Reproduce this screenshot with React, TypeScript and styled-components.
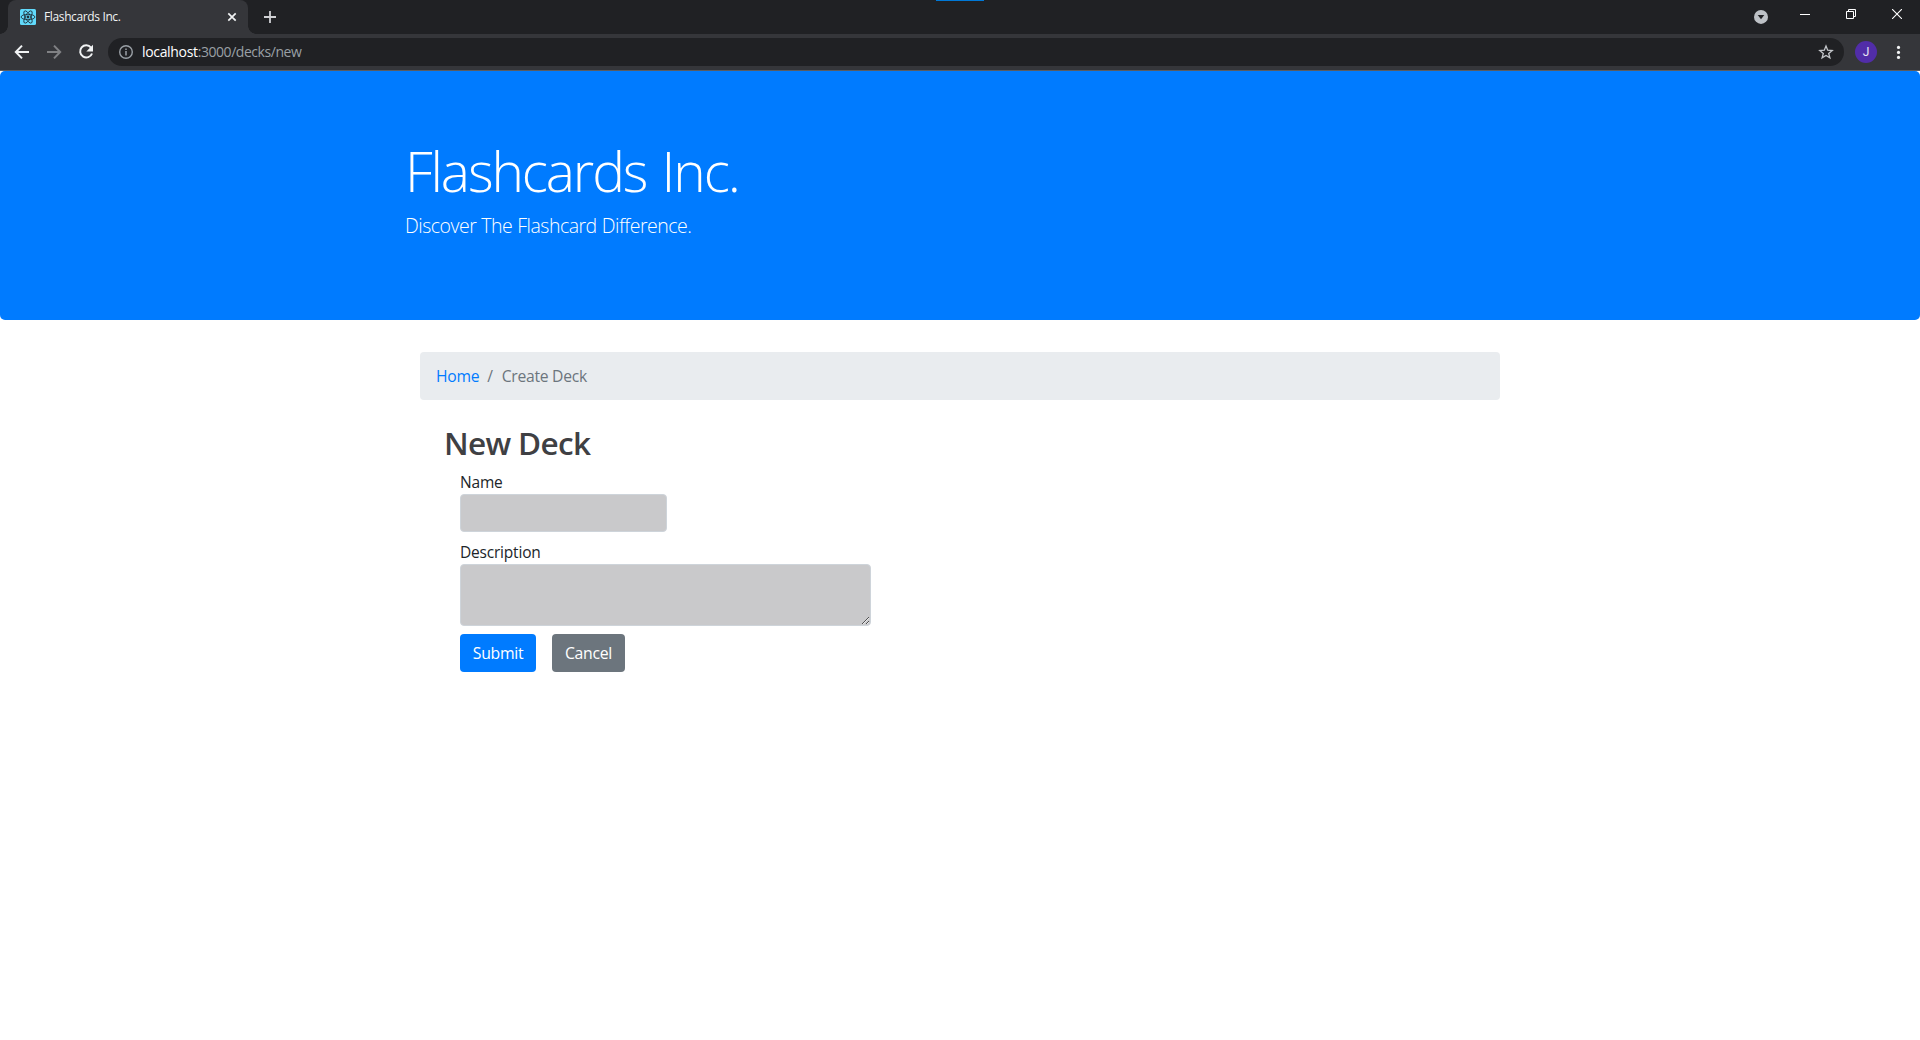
import React from "react";
import styled, { createGlobalStyle } from "styled-components";

const GlobalStyle = createGlobalStyle`
  *, *::before, *::after { box-sizing: border-box; }
  html, body { margin: 0; padding: 0; }
  body {
    background: #fff;
    color: #212529;
    font-family: "Open Sans", "Noto Sans", sans-serif;
    font-size: 16px;
    line-height: 1.5;
    overflow: hidden;
  }
`;

const Window = styled.div`
  display: flex;
  flex-direction: column;
  width: 1920px;
  height: 1040px;
  overflow: hidden;
  background: #fff;
`;

const TabStrip = styled.div`
  position: relative;
  display: flex;
  height: 34px;
  padding-left: 8px;
  background: #202124;
`;

const DragMarker = styled.div`
  position: absolute;
  top: 0;
  left: 936px;
  width: 48px;
  height: 1px;
  background: #0078d7;
`;

const Tab = styled.div`
  position: relative;
  display: flex;
  align-items: center;
  width: 240px;
  height: 34px;
  padding: 0 8px 0 12px;
  border-radius: 8px 8px 0 0;
  background: #35363a;

  &::before,
  &::after {
    content: "";
    position: absolute;
    bottom: 0;
    width: 8px;
    height: 8px;
  }
  &::before {
    left: -8px;
    background: radial-gradient(circle at 0 0, transparent 7.5px, #35363a 8px);
  }
  &::after {
    right: -8px;
    background: radial-gradient(circle at 100% 0, transparent 7.5px, #35363a 8px);
  }
`;

const TabTitle = styled.span`
  flex: 1;
  margin-left: 8px;
  color: #f1f3f4;
  font-size: 12px;
  line-height: 16px;
  letter-spacing: -0.37px;
  white-space: nowrap;
`;

const Glyph = styled.svg`
  display: block;
  flex: none;
`;

const NewTab = styled.div`
  display: flex;
  align-items: center;
  margin-left: 15px;
`;

const WindowControls = styled.div`
  display: flex;
  margin-left: auto;
  height: 28px;
`;

const Control = styled.div<{ $width: number }>`
  display: flex;
  align-items: center;
  justify-content: center;
  width: ${(p) => p.$width}px;
`;

const Toolbar = styled.div`
  display: flex;
  align-items: center;
  height: 37px;
  padding: 0 14px;
  border-bottom: 1px solid #5b5c60;
  background: #35363a;
`;

const NavButtons = styled.div`
  display: flex;
  gap: 16px;
  margin-right: 14px;
`;

const AddressBar = styled.div`
  display: flex;
  flex: 1;
  align-items: center;
  height: 28px;
  padding: 0 10px;
  border-radius: 14px;
  background: #202124;
`;

const Url = styled.div`
  flex: 1;
  margin-left: 8px;
  color: #9aa0a6;
  font-size: 14px;
  line-height: 20px;
  letter-spacing: -0.45px;
  white-space: nowrap;
`;

const Host = styled.span`
  color: #fff;
  letter-spacing: -0.33px;
`;

const Avatar = styled.div`
  display: flex;
  align-items: center;
  justify-content: center;
  width: 22px;
  height: 22px;
  margin: 0 13px 0 11px;
  border-radius: 50%;
  background: #512da8;
  color: #e8e4f4;
  font-family: Roboto, sans-serif;
  font-size: 12px;
  line-height: 22px;
`;

const Jumbotron = styled.header`
  height: 249px;
  flex: none;
  padding: 64px 32px;
  border-radius: 5px;
  background: #007bff;
  color: #fff;
`;

const HeroContainer = styled.div`
  width: 1140px;
  margin: 0 auto;
  padding: 0 15px;
`;

const Display = styled.h1`
  margin: 0;
  padding-top: 2px;
  height: 75px;
  font-size: 55px;
  font-weight: 300;
  line-height: 67px;
  letter-spacing: -2.1px;
  word-spacing: 3px;
  white-space: nowrap;
`;

const Lead = styled.p`
  margin: 0;
  font-size: 19.5px;
  font-weight: 300;
  line-height: 31px;
  letter-spacing: -0.5px;
  word-spacing: 0.5px;
`;

const Content = styled.main`
  width: 1080px;
  margin: 32px auto 0;
`;

const Breadcrumb = styled.nav`
  display: flex;
  height: 48px;
  padding: 12px 16px;
  border-radius: 4px;
  background: #e9ecef;
  color: #6c757d;
  font-size: 15.7px;
  line-height: 24px;
  letter-spacing: -0.28px;
`;

const Crumb = styled.a`
  color: #007bff;
  text-decoration: none;
`;

const Separator = styled.span`
  padding: 0 9px 0 8px;
`;

const DeckForm = styled.form`
  display: flex;
  flex-direction: column;
  align-items: flex-start;
  padding: 24px 0 0 40px;
`;

const Title = styled.h2`
  height: 46px;
  margin: 0 0 0 -16px;
  color: #3f4043;
  font-size: 31.5px;
  font-weight: 600;
  line-height: 38px;
  letter-spacing: -0.65px;
`;

const Label = styled.label`
  height: 24px;
  font-size: 15.5px;
  line-height: 24px;
  letter-spacing: -0.2px;
`;

const TextInput = styled.input`
  width: 207px;
  height: 38px;
  margin: 0 0 8px;
  padding: 6px 12px;
  border: 1px solid #ced4da;
  border-radius: 4px;
  background: #c9c9cb;
  outline: none;
`;

const TextArea = styled.textarea`
  display: block;
  width: 411px;
  height: 62px;
  margin: 0 0 8px;
  padding: 6px 12px;
  border: 1px solid #ced4da;
  border-radius: 4px;
  background: #c9c9cb;
  outline: none;
  resize: both;
`;

const Actions = styled.div`
  display: flex;
  gap: 16px;
`;

const Button = styled.button<{ $tone: string; $width: number }>`
  width: ${(p) => p.$width}px;
  height: 38px;
  padding: 0;
  border: 0;
  border-radius: 4px;
  background: ${(p) => p.$tone};
  color: #fff;
  font-family: inherit;
  font-size: 15.8px;
  line-height: 24px;
  letter-spacing: -0.3px;
`;

const ReactFavicon = () => (
  <Glyph width="16" height="16" viewBox="0 0 16 16">
    <rect width="16" height="16" rx="1.5" fill="#61dafb" />
    <g fill="none" stroke="#20303a" strokeWidth="0.85">
      <ellipse cx="8" cy="8" rx="6.9" ry="2.7" />
      <ellipse cx="8" cy="8" rx="6.9" ry="2.7" transform="rotate(60 8 8)" />
      <ellipse cx="8" cy="8" rx="6.9" ry="2.7" transform="rotate(120 8 8)" />
    </g>
    <circle cx="8" cy="8" r="1.4" fill="#20303a" />
  </Glyph>
);

const BackArrow = ({ color, flip }: { color: string; flip?: boolean }) => (
  <Glyph width="16" height="16" viewBox="0 0 16 16">
    <path
      d="M15 8H2.4M8 1.6 1.8 8 8 14.4"
      fill="none"
      stroke={color}
      strokeWidth="2"
      transform={flip ? "rotate(180 8 8)" : undefined}
    />
  </Glyph>
);

export default function App() {
  return (
    <>
      <GlobalStyle />
      <Window>
        <TabStrip>
          <DragMarker />
          <Tab>
            <ReactFavicon />
            <TabTitle>Flashcards Inc.</TabTitle>
            <Glyph width="16" height="16" viewBox="0 0 16 16">
              <path d="m4.3 4.3 7.4 7.4m0-7.4-7.4 7.4" stroke="#f1f3f4" strokeWidth="1.7" />
            </Glyph>
          </Tab>
          <NewTab>
            <Glyph width="14" height="14" viewBox="0 0 14 14">
              <path d="M7 1v12M1 7h12" stroke="#d0d1d4" strokeWidth="1.8" />
            </Glyph>
          </NewTab>
          <WindowControls>
            <Control $width={42}>
              <Glyph width="14" height="20" viewBox="0 0 14 20">
                <circle cx="7" cy="12.9" r="7" fill="#bdc1c6" />
                <path d="M3.7 11.1h6.6L7 15.3z" fill="#202124" />
              </Glyph>
            </Control>
            <Control $width={46}>
              <Glyph width="10" height="10" viewBox="0 0 10 10">
                <path d="M0 5.5h10" stroke="#fff" />
              </Glyph>
            </Control>
            <Control $width={46}>
              <Glyph width="10" height="10" viewBox="0 0 10 10">
                <path d="M.5 2.5h7v7h-7zM2.5 2.5v-2h7v7h-2" fill="none" stroke="#fff" />
              </Glyph>
            </Control>
            <Control $width={46}>
              <Glyph width="10" height="10" viewBox="0 0 10 10">
                <path d="m0 0 10 10M10 0 0 10" stroke="#fff" strokeWidth="1.1" />
              </Glyph>
            </Control>
          </WindowControls>
        </TabStrip>
        <Toolbar>
          <NavButtons>
            <BackArrow color="#f1f3f4" />
            <BackArrow color="#808184" flip />
            <Glyph width="16" height="16" viewBox="0 0 16 16">
              <path d="M13 3.6A6.1 6.1 0 1 0 14 9.5" fill="none" stroke="#f1f3f4" strokeWidth="2" />
              <path d="M15 .8v6.7H8.3z" fill="#f1f3f4" />
            </Glyph>
          </NavButtons>
          <AddressBar>
            <Glyph width="16" height="16" viewBox="0 0 16 16">
              <circle cx="8" cy="8" r="6.3" fill="none" stroke="#9aa0a6" strokeWidth="1.4" />
              <path d="M8 7v4.4M8 4.5v1.5" stroke="#9aa0a6" strokeWidth="1.5" />
            </Glyph>
            <Url>
              <Host>localhost</Host>:3000/decks/new
            </Url>
            <Glyph width="16" height="16" viewBox="0 0 16 16">
              <path
                d="m8 2 1.7 4.2 4.5.3-3.5 2.9 1.2 4.4L8 11.4l-3.9 2.4 1.2-4.4L1.8 6.5l4.5-.3z"
                fill="none"
                stroke="#c4c7cb"
                strokeWidth="1.3"
              />
            </Glyph>
          </AddressBar>
          <Avatar>J</Avatar>
          <Glyph width="16" height="16" viewBox="0 0 16 16" fill="#f1f3f4">
            <circle cx="8.5" cy="3.4" r="1.6" />
            <circle cx="8.5" cy="8.4" r="1.6" />
            <circle cx="8.5" cy="13.4" r="1.6" />
          </Glyph>
        </Toolbar>
        <Jumbotron>
          <HeroContainer>
            <Display>Flashcards Inc.</Display>
            <Lead>Discover The Flashcard Difference.</Lead>
          </HeroContainer>
        </Jumbotron>
        <Content>
          <Breadcrumb>
            <Crumb>Home</Crumb>
            <Separator>/</Separator>
            <span>Create Deck</span>
          </Breadcrumb>
          <DeckForm>
            <Title>New Deck</Title>
            <Label htmlFor="name">Name</Label>
            <TextInput id="name" type="text" />
            <Label htmlFor="description">Description</Label>
            <TextArea id="description" />
            <Actions>
              <Button type="button" $tone="#007bff" $width={76}>
                Submit
              </Button>
              <Button type="button" $tone="#6c757d" $width={73}>
                Cancel
              </Button>
            </Actions>
          </DeckForm>
        </Content>
      </Window>
    </>
  );
}
